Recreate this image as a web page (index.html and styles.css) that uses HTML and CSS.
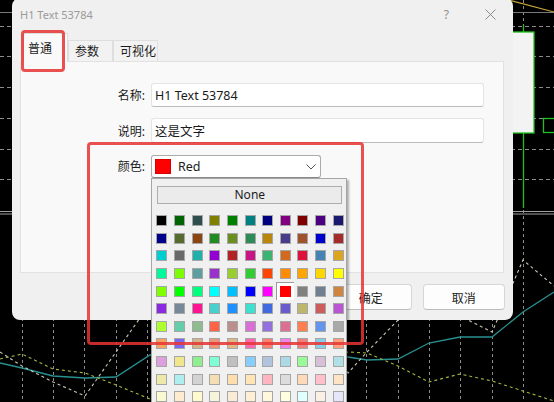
FILE: index.html
```html
<!DOCTYPE html>
<html lang="zh">
<head>
<meta charset="utf-8">
<title>H1 Text 53784</title>
<link rel="stylesheet" href="styles.css">
</head>
<body>
<div class="screen">
  <svg class="chart" width="554" height="402" viewBox="0 0 554 402">
    <rect width="554" height="402" fill="#000"/>
    <g stroke="#8c8c8c" stroke-width="1" stroke-dasharray="4 3">
      <line x1="0" y1="26.5" x2="554" y2="26.5"/>
      <line x1="0" y1="56.5" x2="554" y2="56.5"/>
      <line x1="0" y1="87.5" x2="554" y2="87.5"/>
      <line x1="0" y1="118.5" x2="554" y2="118.5"/>
      <line x1="0" y1="149.5" x2="554" y2="149.5"/>
      <line x1="0" y1="179.5" x2="554" y2="179.5"/>
    </g>
    <g stroke="#8c8c8c" stroke-width="1" stroke-dasharray="3 3">
      <line x1="22.5" y1="0" x2="22.5" y2="402"/>
      <line x1="53.5" y1="0" x2="53.5" y2="402"/>
      <line x1="84.5" y1="0" x2="84.5" y2="402"/>
      <line x1="116.5" y1="0" x2="116.5" y2="402"/>
      <line x1="147.5" y1="0" x2="147.5" y2="402"/>
      <line x1="366.5" y1="0" x2="366.5" y2="402"/>
      <line x1="398.5" y1="0" x2="398.5" y2="402"/>
      <line x1="429.5" y1="0" x2="429.5" y2="402"/>
      <line x1="460.5" y1="0" x2="460.5" y2="402"/>
      <line x1="492.5" y1="0" x2="492.5" y2="402"/>
      <line x1="523.5" y1="0" x2="523.5" y2="402"/>
    </g>
    <line x1="0" y1="12.5" x2="554" y2="12.5" stroke="#7a7a7a" stroke-width="1"/>
    <line x1="505" y1="-1" x2="554" y2="12" stroke="#c9a83a" stroke-width="1.2"/>
    <line x1="0" y1="211.5" x2="554" y2="211.5" stroke="#a0a0a0" stroke-width="1"/>
    <line x1="0" y1="214" x2="554" y2="214" stroke="#a0a0a0" stroke-width="1"/>
    <line x1="523.5" y1="25" x2="523.5" y2="208" stroke="#20c020" stroke-width="1.3"/>
    <rect x="510.5" y="32" width="23.5" height="101" fill="#f3f3f3" stroke="#20c020" stroke-width="1.3"/>
    <rect x="543.5" y="118.5" width="20" height="14" fill="#000" stroke="#20c020" stroke-width="1.3"/>
    <polyline fill="none" stroke="#2a9090" stroke-width="1.3" points="0,363 22,368 53,376 85,378 116,377 150,355 250,352 348,357 367,360 398,359 429,343 460,337 492,337 523,312 554,292"/>
    <polyline fill="none" stroke="#a6b33c" stroke-width="1.1" stroke-dasharray="3 3" points="0,359 22,354 53,369 85,373 116,385 150,399 250,380 348,352 367,353 398,366 429,382 460,374 492,381 554,401"/>
    <polyline fill="none" stroke="#c9c9b4" stroke-width="1.1" stroke-dasharray="3 3" points="0,352 22,366 53,382 85,396 140,318 300,300 348,373 367,352 398,320 460,300 470,321 492,332 523,260 554,286"/>
  </svg>

  <div class="dialog">
    <div class="titlebar">
      <span class="title">H1 Text 53784</span>
      <span class="help">?</span>
      <svg class="close" width="11" height="11" viewBox="0 0 11 11">
        <path d="M0.5 0.5 L10.5 10.5 M10.5 0.5 L0.5 10.5" stroke="#8a8a8a" stroke-width="1" fill="none"/>
      </svg>
    </div>
    <div class="tabs">
      <div class="tab active">普通</div>
      <div class="tab">参数</div>
      <div class="tab">可视化</div>
    </div>
    <div class="panel">
      <div class="form">
        <span class="lbl">名称:</span>
        <div class="input">H1 Text 53784</div>
        <span class="lbl">说明:</span>
        <div class="input">这是文字</div>
        <span class="lbl">颜色:</span>
        <div class="combo">
          <span class="chip"></span>
          <span class="combo-text">Red</span>
          <svg class="chev" width="10" height="6" viewBox="0 0 10 6">
            <polyline points="0.5,0.5 5,5 9.5,0.5" fill="none" stroke="#555" stroke-width="1"/>
          </svg>
        </div>
      </div>
    </div>
    <div class="buttons">
      <div class="btn">确定</div>
      <div class="btn">取消</div>
    </div>
  </div>

  <div class="popup">
    <div class="none-btn">None</div>
    <div class="swatches">
      <span class="sw" style="background:#000000"></span><span class="sw" style="background:#006400"></span><span class="sw" style="background:#2F4F4F"></span><span class="sw" style="background:#808000"></span><span class="sw" style="background:#008000"></span><span class="sw" style="background:#008080"></span><span class="sw" style="background:#000080"></span><span class="sw" style="background:#800080"></span><span class="sw" style="background:#800000"></span><span class="sw" style="background:#4B0082"></span><span class="sw" style="background:#191970"></span>
      <span class="sw" style="background:#00008B"></span><span class="sw" style="background:#556B2F"></span><span class="sw" style="background:#8B4513"></span><span class="sw" style="background:#228B22"></span><span class="sw" style="background:#6B8E23"></span><span class="sw" style="background:#2E8B57"></span><span class="sw" style="background:#B8860B"></span><span class="sw" style="background:#483D8B"></span><span class="sw" style="background:#A0522D"></span><span class="sw" style="background:#0000CD"></span><span class="sw" style="background:#A52A2A"></span>
      <span class="sw" style="background:#00CED1"></span><span class="sw" style="background:#696969"></span><span class="sw" style="background:#20B2AA"></span><span class="sw" style="background:#9400D3"></span><span class="sw" style="background:#B22222"></span><span class="sw" style="background:#C71585"></span><span class="sw" style="background:#3CB371"></span><span class="sw" style="background:#D2691E"></span><span class="sw" style="background:#DC143C"></span><span class="sw" style="background:#4682B4"></span><span class="sw" style="background:#DAA520"></span>
      <span class="sw" style="background:#00FA9A"></span><span class="sw" style="background:#7CFC00"></span><span class="sw" style="background:#5F9EA0"></span><span class="sw" style="background:#9932CC"></span><span class="sw" style="background:#9ACD32"></span><span class="sw" style="background:#32CD32"></span><span class="sw" style="background:#FF4500"></span><span class="sw" style="background:#FF8C00"></span><span class="sw" style="background:#FFA500"></span><span class="sw" style="background:#FFD700"></span><span class="sw" style="background:#FFFF00"></span>
      <span class="sw" style="background:#7FFF00"></span><span class="sw" style="background:#00FF00"></span><span class="sw" style="background:#00FF7F"></span><span class="sw" style="background:#00FFFF"></span><span class="sw" style="background:#00BFFF"></span><span class="sw" style="background:#0000FF"></span><span class="sw" style="background:#FF00FF"></span><span class="sw sel" style="background:#FF0000"></span><span class="sw" style="background:#808080"></span><span class="sw" style="background:#708090"></span><span class="sw" style="background:#CD853F"></span>
      <span class="sw" style="background:#8A2BE2"></span><span class="sw" style="background:#778899"></span><span class="sw" style="background:#FF1493"></span><span class="sw" style="background:#48D1CC"></span><span class="sw" style="background:#1E90FF"></span><span class="sw" style="background:#40E0D0"></span><span class="sw" style="background:#4169E1"></span><span class="sw" style="background:#6A5ACD"></span><span class="sw" style="background:#BDB76B"></span><span class="sw" style="background:#CD5C5C"></span><span class="sw" style="background:#BA55D3"></span>
      <span class="sw" style="background:#ADFF2F"></span><span class="sw" style="background:#66CDAA"></span><span class="sw" style="background:#8FBC8F"></span><span class="sw" style="background:#FF6347"></span><span class="sw" style="background:#BC8F8F"></span><span class="sw" style="background:#DA70D6"></span><span class="sw" style="background:#9370DB"></span><span class="sw" style="background:#DB7093"></span><span class="sw" style="background:#FF7F50"></span><span class="sw" style="background:#6495ED"></span><span class="sw" style="background:#A9A9A9"></span>
      <span class="sw" style="background:#F4A460"></span><span class="sw" style="background:#7B68EE"></span><span class="sw" style="background:#D2B48C"></span><span class="sw" style="background:#E9967A"></span><span class="sw" style="background:#DEB887"></span><span class="sw" style="background:#FF69B4"></span><span class="sw" style="background:#FA8072"></span><span class="sw" style="background:#EE82EE"></span><span class="sw" style="background:#F08080"></span><span class="sw" style="background:#87CEEB"></span><span class="sw" style="background:#FFA07A"></span>
      <span class="sw" style="background:#DDA0DD"></span><span class="sw" style="background:#F0E68C"></span><span class="sw" style="background:#90EE90"></span><span class="sw" style="background:#7FFFD4"></span><span class="sw" style="background:#C0C0C0"></span><span class="sw" style="background:#87CEFA"></span><span class="sw" style="background:#B0C4DE"></span><span class="sw" style="background:#ADD8E6"></span><span class="sw" style="background:#98FB98"></span><span class="sw" style="background:#D8BFD8"></span><span class="sw" style="background:#B0E0E6"></span>
      <span class="sw" style="background:#EEE8AA"></span><span class="sw" style="background:#AFEEEE"></span><span class="sw" style="background:#D3D3D3"></span><span class="sw" style="background:#F5DEB3"></span><span class="sw" style="background:#FFDEAD"></span><span class="sw" style="background:#FFE4B5"></span><span class="sw" style="background:#FFB6C1"></span><span class="sw" style="background:#DCDCDC"></span><span class="sw" style="background:#FFDAB9"></span><span class="sw" style="background:#FFC0CB"></span><span class="sw" style="background:#FFE4C4"></span>
      <span class="sw" style="background:#FAFAD2"></span><span class="sw" style="background:#FFEBCD"></span><span class="sw" style="background:#FFFACD"></span><span class="sw" style="background:#F5F5DC"></span><span class="sw" style="background:#FAEBD7"></span><span class="sw" style="background:#FFEFD5"></span><span class="sw" style="background:#FFF8DC"></span><span class="sw" style="background:#FFFFE0"></span><span class="sw" style="background:#E0FFFF"></span><span class="sw" style="background:#FAF0E6"></span><span class="sw" style="background:#E6E6FA"></span>
    </div>
  </div>

  <div class="mark mark-tab"></div>
  <div class="mark mark-color"></div>
</div>
</body>
</html>
```

FILE: styles.css
```css
html, body {
  margin: 0;
  padding: 0;
}

body {
  width: 554px;
  height: 402px;
  overflow: hidden;
  background: #000;
  font-family: "Noto Sans", "Noto Sans CJK SC", sans-serif;
  font-size: 12px;
  color: #1b1b1b;
}

.screen {
  position: relative;
  width: 554px;
  height: 402px;
  overflow: hidden;
}

.chart {
  position: absolute;
  left: 0;
  top: 0;
  display: block;
}

/* dialog window */
.dialog {
  position: absolute;
  left: 12px;
  top: -2px;
  width: 501px;
  height: 322px;
  box-sizing: border-box;
  background: #f0f0f0;
  border-radius: 8px;
  display: flex;
  flex-direction: column;
  z-index: 1;
}

.titlebar {
  height: 32px;
  flex: none;
  display: flex;
  align-items: center;
  padding-left: 8px;
}

.title {
  flex: 1;
  font-size: 11px;
  color: #9a9a9a;
}

.help {
  font-size: 12px;
  color: #8f8f8f;
  margin-right: 36px;
}

.close {
  display: block;
  margin-right: 17px;
}

.tabs {
  height: 31px;
  flex: none;
  display: flex;
  align-items: flex-end;
  padding-left: 11px;
  position: relative;
  z-index: 2;
}

.tab {
  width: 45px;
  height: 21px;
  box-sizing: border-box;
  padding-left: 6px;
  border: 1px solid #dedede;
  border-bottom: none;
  background: #f2f2f2;
  font-family: "Noto Sans CJK SC", sans-serif;
  font-size: 12px;
  line-height: 20px;
  white-space: nowrap;
}

.tab.active {
  height: 29px;
  margin-bottom: -1px;
  padding-left: 4px;
  background: #f9f9f9;
  line-height: 28px;
}

.panel {
  flex: none;
  height: 212px;
  margin: 0 9px 0 8px;
  box-sizing: border-box;
  border: 1px solid #e2e2e2;
  background: #f9f9f9;
}

.form {
  display: grid;
  grid-template-columns: 124px 333px;
  grid-template-rows: 24px 25px 24px;
  column-gap: 6px;
  row-gap: 11px;
  padding-top: 21px;
  align-items: center;
}

.lbl {
  text-align: right;
  font-family: "Noto Sans", "Noto Sans CJK SC", sans-serif;
  font-size: 12px;
}

.input {
  height: 100%;
  box-sizing: border-box;
  background: #fff;
  border: 1px solid #e4e4e4;
  border-bottom-color: #bcbcbc;
  border-radius: 3px;
  padding-left: 3px;
  display: flex;
  align-items: center;
  font-size: 12.5px;
  color: #1a1a1a;
}

.combo {
  align-self: end;
  width: 170px;
  height: 23px;
  box-sizing: border-box;
  background: #fff;
  border: 1px solid #ababab;
  border-bottom-color: #8a8a8a;
  border-radius: 3px;
  padding: 0 3px;
  display: flex;
  align-items: center;
}

.chip {
  width: 16px;
  height: 15px;
  box-sizing: border-box;
  background: #f00;
  border: 1px solid #d80000;
}

.combo-text {
  margin-left: 7px;
  font-size: 12.5px;
}

.chev {
  display: block;
  margin-left: auto;
  margin-right: 1px;
}

.buttons {
  flex: none;
  display: flex;
  justify-content: flex-end;
  gap: 10.5px;
  padding-right: 8px;
  margin-top: 11px;
}

.btn {
  width: 82.5px;
  height: 26px;
  box-sizing: border-box;
  background: #fdfdfd;
  border: 1px solid #d6d6d6;
  border-bottom-color: #bdbdbd;
  border-radius: 4px;
  display: flex;
  align-items: center;
  justify-content: center;
  font-family: "Noto Sans CJK SC", sans-serif;
  font-size: 12px;
}

/* colour drop-down */
.popup {
  position: absolute;
  left: 151px;
  top: 178px;
  width: 196px;
  height: 240px;
  box-sizing: border-box;
  background: #f0f0f0;
  border: 1px solid #a5a5a5;
  box-shadow: 2px 2px 2px rgba(0, 0, 0, 0.3);
  padding: 7px 0 0 4.3px;
  z-index: 3;
}

.none-btn {
  margin-left: 1px;
  width: 185px;
  height: 18px;
  box-sizing: border-box;
  background: #ebebeb;
  border: 1px solid #adadad;
  text-align: center;
  font-size: 12px;
  line-height: 16px;
}

.swatches {
  margin-top: 11px;
  display: grid;
  grid-template-columns: repeat(11, 11px);
  grid-auto-rows: 11px;
  gap: 6.65px;
}

.sw {
  display: block;
  width: 11px;
  height: 11px;
  box-sizing: border-box;
  border: 1px solid #a6a6a6;
}

.sw.sel {
  position: relative;
  border-color: #f00;
}

.sw.sel::before {
  content: "";
  position: absolute;
  left: -5px;
  top: -5px;
  right: -4px;
  bottom: -4px;
  background: #fff;
  border-left: 1px solid #9a9a9a;
  border-top: 1px solid #9a9a9a;
  z-index: -1;
}

/* red annotation frames */
.mark {
  position: absolute;
  box-sizing: border-box;
  border: 3px solid rgba(230, 52, 52, 0.85);
  border-radius: 4px;
  z-index: 5;
}

.mark-tab {
  left: 21px;
  top: 30px;
  width: 44px;
  height: 42px;
}

.mark-color {
  left: 87px;
  top: 142px;
  width: 277px;
  height: 203px;
  border-width: 3.5px;
}
```
